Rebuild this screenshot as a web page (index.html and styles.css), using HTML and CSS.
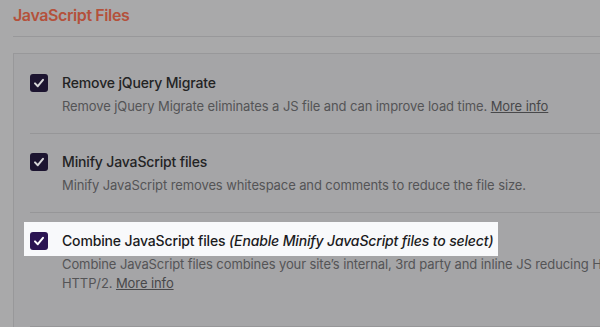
FILE: index.html
```html
<!DOCTYPE html>
<html lang="en">
<head>
  <meta charset="UTF-8" />
  <title>JavaScript Files</title>
  <link rel="stylesheet" href="styles.css">
</head>
<body>
  <div class="page">
    <h2 class="section-title">JavaScript Files</h2>

    <div class="panel">
      <div class="option">
        <div class="option-head">
          <span class="checkbox"><svg viewBox="0 0 18 18" width="18" height="18"><polyline points="5,9.4 7.8,12.2 13,5.8" /></svg></span>
          <span class="option-label">Remove jQuery Migrate</span>
        </div>
        <p class="option-desc">Remove jQuery Migrate eliminates a JS file and can improve load time. <a href="#">More info</a></p>
      </div>

      <div class="option">
        <div class="option-head">
          <span class="checkbox"><svg viewBox="0 0 18 18" width="18" height="18"><polyline points="5,9.4 7.8,12.2 13,5.8" /></svg></span>
          <span class="option-label">Minify JavaScript files</span>
        </div>
        <p class="option-desc">Minify JavaScript removes whitespace and comments to reduce the file size.</p>
      </div>

      <div class="option option-last">
        <div class="option-head spotlight">
          <span class="checkbox"><svg viewBox="0 0 18 18" width="18" height="18"><polyline points="5,9.4 7.8,12.2 13,5.8" /></svg></span>
          <span class="option-label">Combine JavaScript files <em>(Enable Minify JavaScript files to select)</em></span>
        </div>
        <p class="option-desc">Combine JavaScript files combines your site’s internal, 3rd party and inline JS reducing HTTP requests. Not recommended for sites using<br>HTTP/2. <a href="#">More info</a></p>
      </div>
    </div>
  </div>
</body>
</html>
```

FILE: styles.css
```css
html, body {
  overflow: hidden;
}
body {
  margin: 0;
  background-color: #a9a9aa;
  font-family: Inter, "Noto Sans", Arial, sans-serif;
  color: #232324;
}
.page {
  width: 1100px;
  padding: 5px 0 0 13px;
}
.section-title {
  margin: 0;
  padding-bottom: 11px;
  font-size: 16px;
  line-height: 20px;
  font-weight: 600;
  color: #b4513b;
  border-bottom: 1px solid #98989a;
  letter-spacing: -0.4px;
}
.panel {
  margin-top: 16px;
  padding: 0 0 0 16px;
  background: #a5a5a7;
  border-top: 1px solid #98989a;
  border-left: 1px solid #98989a;
}
.option {
  padding: 19px 0 17px;
  border-bottom: 1px solid #969698;
}
.option:first-child {
  padding-top: 20px;
}
.option-last {
  padding-bottom: 33px;
}
.option-head {
  display: flex;
  align-items: center;
  gap: 14px;
  height: 18px;
}
.checkbox {
  width: 18px;
  height: 18px;
  border-radius: 3px;
  background: #1c1430;
  flex: none;
}
.checkbox svg {
  display: block;
}
.checkbox polyline {
  fill: none;
  stroke: #d6d6d8;
  stroke-width: 2;
  stroke-linecap: round;
  stroke-linejoin: round;
}
.option-label {
  font-size: 14px;
  line-height: 18px;
  font-weight: 500;
  letter-spacing: -0.15px;
  white-space: nowrap;
}
.option-label em {
  font-weight: 500;
}
.option-desc {
  margin: 5px 0 0 32px;
  font-size: 13px;
  line-height: 19px;
  color: #545456;
  letter-spacing: -0.1px;
  white-space: nowrap;
}
.option-desc a {
  color: #48484a;
  text-decoration: underline;
}
/* highlighted row, sits above the dimmed page */
.spotlight {
  width: fit-content;
  margin: -10px -6px -6px;
  padding: 10px 5px 6px 6px;
  background: #f8f9fb;
  color: #1b1b1d;
}
.spotlight .checkbox {
  background: #2b1552;
}
.spotlight .checkbox polyline {
  stroke: #ffffff;
}
```
